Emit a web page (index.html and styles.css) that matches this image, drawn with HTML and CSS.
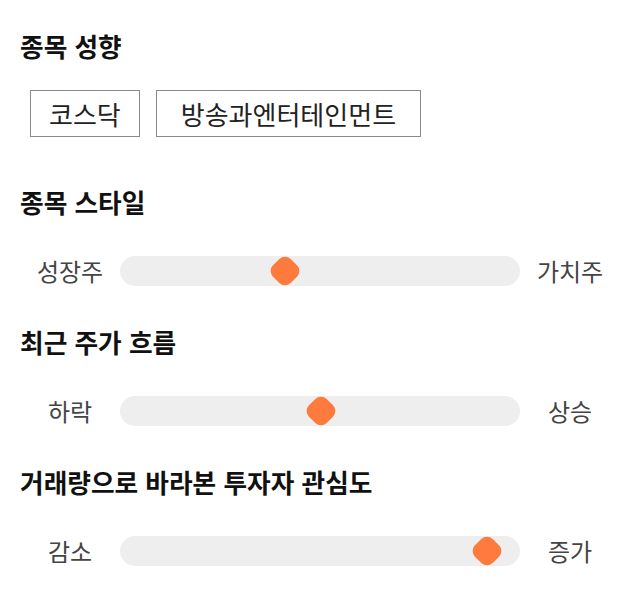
FILE: index.html
```html
<!DOCTYPE html>
<html lang="ko">
<head>
<meta charset="utf-8">
<link rel="stylesheet" href="styles.css">
</head>
<body>
<main class="page">
  <section class="section section-chips">
    <h2 class="title">종목 성향</h2>
    <div class="chips">
      <span class="chip">코스닥</span>
      <span class="chip chip-wide">방송과엔터테인먼트</span>
    </div>
  </section>
  <section class="section">
    <h2 class="title">종목 스타일</h2>
    <div class="scale">
      <span class="label">성장주</span>
      <div class="track"><span class="thumb" style="left: 41.3%"></span></div>
      <span class="label">가치주</span>
    </div>
  </section>
  <section class="section">
    <h2 class="title">최근 주가 흐름</h2>
    <div class="scale">
      <span class="label">하락</span>
      <div class="track"><span class="thumb" style="left: 50.2%"></span></div>
      <span class="label">상승</span>
    </div>
  </section>
  <section class="section">
    <h2 class="title">거래량으로 바라본 투자자 관심도</h2>
    <div class="scale">
      <span class="label">감소</span>
      <div class="track"><span class="thumb" style="left: 91.7%"></span></div>
      <span class="label">증가</span>
    </div>
  </section>
</main>
</body>
</html>
```

FILE: styles.css
```css
* { box-sizing: border-box; }
html, body { margin: 0; padding: 0; background: #fff; }
body {
  font-family: "Noto Sans CJK KR", "Noto Sans", sans-serif;
  color: #111;
}
.page {
  padding: 30px 20px 0 20px;
  display: flex;
  flex-direction: column;
  gap: 35px;
}
.section-chips { margin-bottom: 14px; }
.title {
  margin: 0;
  font-size: 25.7px;
  font-weight: 700;
  line-height: 32px;
  color: #111;
}
.chips {
  display: flex;
  gap: 16px;
  margin: 28px 0 0 10px;
}
.chip {
  border: 1px solid #8a8a8a;
  height: 47px;
  padding: 0 18px;
  display: flex;
  align-items: center;
  font-size: 26px;
  color: #222;
}
.chip-wide { padding: 0 24px; }
.scale {
  margin-top: 33px;
  height: 40px;
  display: flex;
  align-items: center;
}
.label {
  width: 100px;
  text-align: center;
  font-size: 24px;
  color: #444;
  line-height: 40px;
}
.track {
  flex: 1;
  height: 30px;
  border-radius: 15px;
  background: #eeeeee;
  position: relative;
}
.thumb {
  position: absolute;
  top: 50%;
  width: 25px;
  height: 25px;
  border-radius: 8px;
  background: #ff7a3d;
  transform: translate(-50%, -50%) rotate(45deg);
}
```
